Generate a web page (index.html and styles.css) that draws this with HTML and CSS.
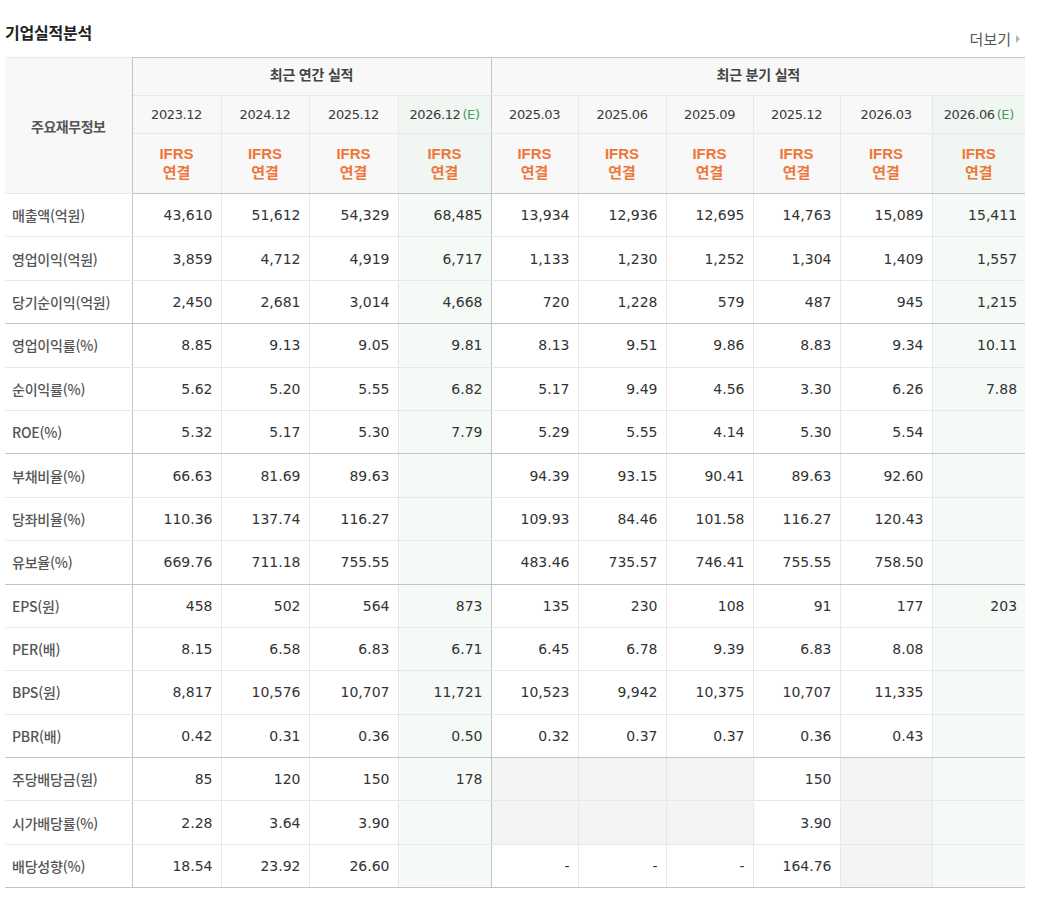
FILE: index.html
```html
<!DOCTYPE html>
<html lang="ko">
<head>
<meta charset="utf-8">
<title>기업실적분석</title>
<link rel="stylesheet" href="styles.css">
</head>
<body>
<div class="wrap">
  <div class="head">
    <h2 class="title">기업실적분석</h2>
    <a class="more" href="#">더보기<span class="arrow"></span></a>
  </div>
  <table class="fin">
    <colgroup>
      <col class="c-label">
      <col class="c89"><col class="c88"><col class="c89"><col class="c93">
      <col class="c87"><col class="c88"><col class="c87"><col class="c87"><col class="c92"><col class="c93">
    </colgroup>
    <thead>
      <tr class="h1">
        <th rowspan="3" class="lbl-head">주요재무정보</th>
        <th colspan="4" class="grp sep">최근 연간 실적</th>
        <th colspan="6" class="grp">최근 분기 실적</th>
      </tr>
      <tr class="h2">
        <th class="date">2023.12</th>
        <th class="date">2024.12</th>
        <th class="date">2025.12</th>
        <th class="date e sep">2026.12<span class="est">(E)</span></th>
        <th class="date">2025.03</th>
        <th class="date">2025.06</th>
        <th class="date">2025.09</th>
        <th class="date">2025.12</th>
        <th class="date">2026.03</th>
        <th class="date e">2026.06<span class="est">(E)</span></th>
      </tr>
      <tr class="h3">
        <th class="ifrs">IFRS<br>연결</th>
        <th class="ifrs">IFRS<br>연결</th>
        <th class="ifrs">IFRS<br>연결</th>
        <th class="ifrs e sep">IFRS<br>연결</th>
        <th class="ifrs">IFRS<br>연결</th>
        <th class="ifrs">IFRS<br>연결</th>
        <th class="ifrs">IFRS<br>연결</th>
        <th class="ifrs">IFRS<br>연결</th>
        <th class="ifrs">IFRS<br>연결</th>
        <th class="ifrs e">IFRS<br>연결</th>
      </tr>
    </thead>
    <tbody>
      <tr>
        <th>매출액(억원)</th>
        <td>43,610</td><td>51,612</td><td>54,329</td><td class="e sep">68,485</td>
        <td>13,934</td><td>12,936</td><td>12,695</td><td>14,763</td><td>15,089</td><td class="e">15,411</td>
      </tr>
      <tr>
        <th>영업이익(억원)</th>
        <td>3,859</td><td>4,712</td><td>4,919</td><td class="e sep">6,717</td>
        <td>1,133</td><td>1,230</td><td>1,252</td><td>1,304</td><td>1,409</td><td class="e">1,557</td>
      </tr>
      <tr class="ge">
        <th>당기순이익(억원)</th>
        <td>2,450</td><td>2,681</td><td>3,014</td><td class="e sep">4,668</td>
        <td>720</td><td>1,228</td><td>579</td><td>487</td><td>945</td><td class="e">1,215</td>
      </tr>
      <tr>
        <th>영업이익률(%)</th>
        <td>8.85</td><td>9.13</td><td>9.05</td><td class="e sep">9.81</td>
        <td>8.13</td><td>9.51</td><td>9.86</td><td>8.83</td><td>9.34</td><td class="e">10.11</td>
      </tr>
      <tr>
        <th>순이익률(%)</th>
        <td>5.62</td><td>5.20</td><td>5.55</td><td class="e sep">6.82</td>
        <td>5.17</td><td>9.49</td><td>4.56</td><td>3.30</td><td>6.26</td><td class="e">7.88</td>
      </tr>
      <tr class="ge">
        <th>ROE(%)</th>
        <td>5.32</td><td>5.17</td><td>5.30</td><td class="e sep">7.79</td>
        <td>5.29</td><td>5.55</td><td>4.14</td><td>5.30</td><td>5.54</td><td class="e"></td>
      </tr>
      <tr>
        <th>부채비율(%)</th>
        <td>66.63</td><td>81.69</td><td>89.63</td><td class="e sep"></td>
        <td>94.39</td><td>93.15</td><td>90.41</td><td>89.63</td><td>92.60</td><td class="e"></td>
      </tr>
      <tr>
        <th>당좌비율(%)</th>
        <td>110.36</td><td>137.74</td><td>116.27</td><td class="e sep"></td>
        <td>109.93</td><td>84.46</td><td>101.58</td><td>116.27</td><td>120.43</td><td class="e"></td>
      </tr>
      <tr class="ge">
        <th>유보율(%)</th>
        <td>669.76</td><td>711.18</td><td>755.55</td><td class="e sep"></td>
        <td>483.46</td><td>735.57</td><td>746.41</td><td>755.55</td><td>758.50</td><td class="e"></td>
      </tr>
      <tr>
        <th>EPS(원)</th>
        <td>458</td><td>502</td><td>564</td><td class="e sep">873</td>
        <td>135</td><td>230</td><td>108</td><td>91</td><td>177</td><td class="e">203</td>
      </tr>
      <tr>
        <th>PER(배)</th>
        <td>8.15</td><td>6.58</td><td>6.83</td><td class="e sep">6.71</td>
        <td>6.45</td><td>6.78</td><td>9.39</td><td>6.83</td><td>8.08</td><td class="e"></td>
      </tr>
      <tr>
        <th>BPS(원)</th>
        <td>8,817</td><td>10,576</td><td>10,707</td><td class="e sep">11,721</td>
        <td>10,523</td><td>9,942</td><td>10,375</td><td>10,707</td><td>11,335</td><td class="e"></td>
      </tr>
      <tr class="ge">
        <th>PBR(배)</th>
        <td>0.42</td><td>0.31</td><td>0.36</td><td class="e sep">0.50</td>
        <td>0.32</td><td>0.37</td><td>0.37</td><td>0.36</td><td>0.43</td><td class="e"></td>
      </tr>
      <tr>
        <th>주당배당금(원)</th>
        <td>85</td><td>120</td><td>150</td><td class="e sep">178</td>
        <td class="x"></td><td class="x"></td><td class="x"></td><td>150</td><td class="x"></td><td class="e"></td>
      </tr>
      <tr>
        <th>시가배당률(%)</th>
        <td>2.28</td><td>3.64</td><td>3.90</td><td class="e sep"></td>
        <td class="x"></td><td class="x"></td><td class="x"></td><td>3.90</td><td class="x"></td><td class="e"></td>
      </tr>
      <tr class="ge">
        <th>배당성향(%)</th>
        <td>18.54</td><td>23.92</td><td>26.60</td><td class="e sep"></td>
        <td>-</td><td>-</td><td>-</td><td>164.76</td><td class="x"></td><td class="e"></td>
      </tr>
    </tbody>
  </table>
</div>
</body>
</html>
```

FILE: styles.css
```css
html, body {
  margin: 0;
  padding: 0;
  background: #fff;
}

.wrap {
  width: 1020px;
  padding-left: 5px;
  font-family: "Noto Sans CJK KR", "DejaVu Sans", sans-serif;
}

.head {
  display: flex;
  justify-content: space-between;
  align-items: flex-end;
  height: 57px;
}

.title {
  margin: 0 0 15px 0;
  font-size: 16px;
  font-weight: 700;
  letter-spacing: -0.2px;
  color: #222;
  line-height: 20px;
}

.more {
  display: flex;
  align-items: center;
  margin: 0 5px 9px 0;
  font-size: 15px;
  font-weight: 400;
  color: #555;
  text-decoration: none;
  line-height: 18px;
}

.arrow {
  display: inline-block;
  margin-left: 5px;
  width: 0;
  height: 0;
  border-top: 4px solid transparent;
  border-bottom: 4px solid transparent;
  border-left: 4px solid #b5b5b5;
}

.fin {
  width: 1020px;
  table-layout: fixed;
  border-collapse: collapse;
  border-top: 1px solid #c4c4c4;
  border-bottom: 1px solid #c4c4c4;
}

.c-label { width: 127px; }
.c87 { width: 87px; }
.c88 { width: 88px; }
.c89 { width: 89px; }
.c92 { width: 92px; }
.c93 { width: 93px; }

.fin th,
.fin td {
  border: 1px solid #e8e8e8;
  padding: 0;
}

.fin tr > :first-child { border-left: none; }
.fin tr > :last-child { border-right: none; }

.fin thead th {
  background: #f8f8f8;
  color: #333;
  font-weight: 400;
  text-align: center;
}

.fin thead .lbl-head {
  border-right: 1px solid #c4c4c4;
  font-size: 14px;
  font-weight: 700;
  color: #555;
  letter-spacing: -0.5px;
  padding-top: 0;
}

.fin .h1 { height: 38px; }
.fin .h2 { height: 38px; }
.fin .h3 { height: 60px; }

.fin thead .grp {
  font-size: 14px;
  font-weight: 700;
  color: #444;
  letter-spacing: -0.2px;
  border-top: none;
  padding-bottom: 5px;
}

.fin thead .date {
  font-family: "DejaVu Sans", sans-serif;
  font-size: 13px;
  font-weight: 400;
  color: #3a3a3a;
  letter-spacing: -0.4px;
}

.est {
  color: #4c9a5c;
  margin-left: 2px;
}

.fin thead .ifrs {
  font-family: "Liberation Sans", "Noto Sans CJK KR", sans-serif;
  font-size: 15px;
  font-weight: 700;
  line-height: 19px;
  color: #ef7638;
  padding-bottom: 2px;
}

.fin thead .ifrs.e,
.fin thead .date.e {
  background: #f0f6f1;
}

.fin .sep {
  border-right: 1px solid #c4c4c4;
}

.fin tbody tr {
  height: 43.4px;
}

.fin tbody th {
  text-align: left;
  padding-left: 7px;
  font-size: 14px;
  font-weight: 500;
  color: #555;
  letter-spacing: -0.2px;
  border-right: 1px solid #c4c4c4;
  white-space: nowrap;
}

.fin tbody td {
  text-align: right;
  padding-right: 8px;
  font-family: "DejaVu Sans", sans-serif;
  font-size: 14px;
  color: #333;
  background: #fff;
}

.fin tbody td.e {
  background: #f5faf6;
}

.fin tbody td.x {
  background: #f4f4f4;
}

.fin thead tr.h3 > th,
.fin tbody tr.ge > th,
.fin tbody tr.ge > td {
  border-bottom: 1px solid #c4c4c4;
}
```
